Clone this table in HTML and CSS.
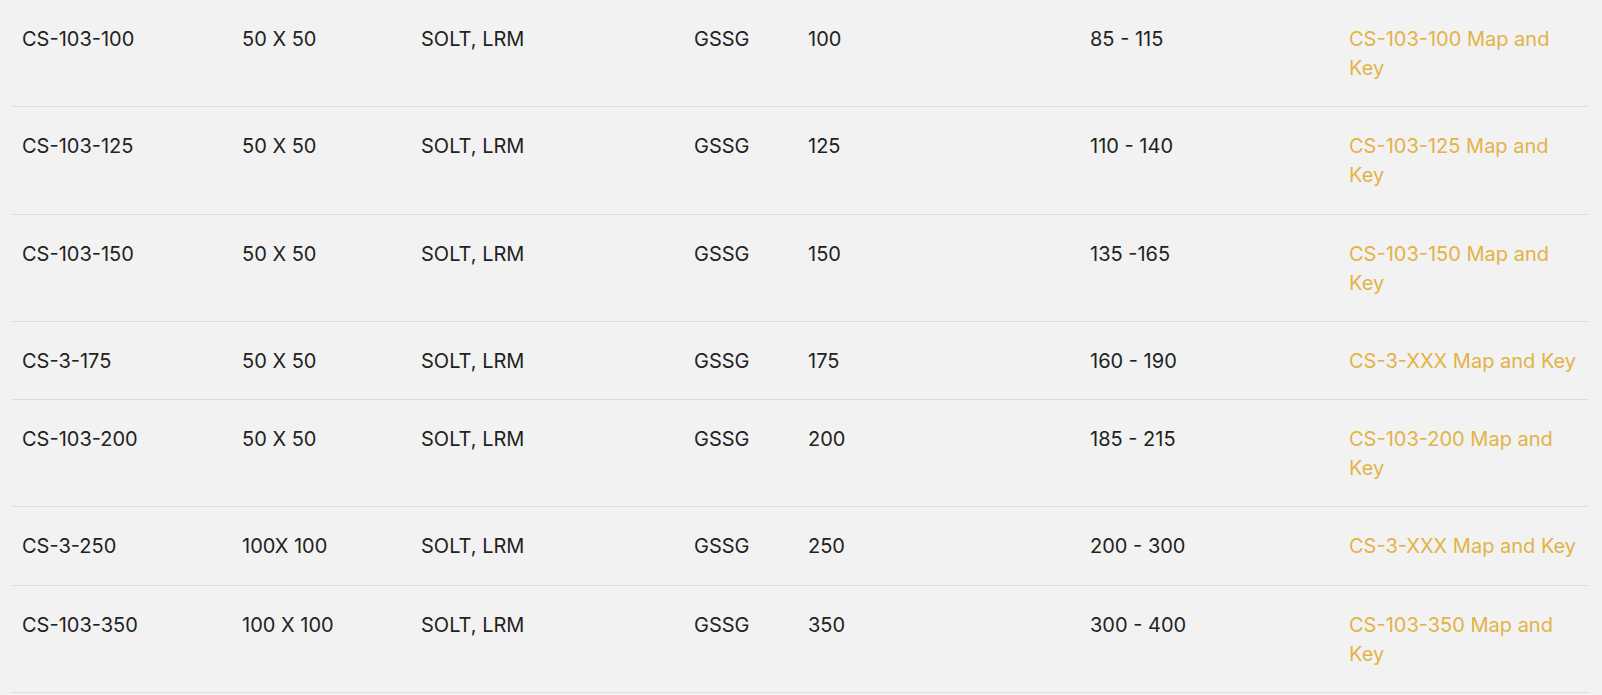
FILE: index.html
```html
<!DOCTYPE html>
<html lang="en">
<head>
<meta charset="utf-8">
<title>Cal Standards</title>
<link rel="stylesheet" href="styles.css">
</head>
<body>
<div class="wrap">
<table class="spec">
<colgroup>
<col class="c1"><col class="c2"><col class="c3"><col class="c4"><col class="c5"><col class="c6"><col class="c7">
</colgroup>
<tbody>
<tr><td>CS-103-100</td><td>50 X 50</td><td>SOLT, LRM</td><td>GSSG</td><td>100</td><td>85 - 115</td><td><a href="#">CS-103-100 Map and Key</a></td></tr>
<tr><td>CS-103-125</td><td>50 X 50</td><td>SOLT, LRM</td><td>GSSG</td><td>125</td><td>110 - 140</td><td><a href="#">CS-103-125 Map and Key</a></td></tr>
<tr><td>CS-103-150</td><td>50 X 50</td><td>SOLT, LRM</td><td>GSSG</td><td>150</td><td>135 -165</td><td><a href="#">CS-103-150 Map and Key</a></td></tr>
<tr><td>CS-3-175</td><td>50 X 50</td><td>SOLT, LRM</td><td>GSSG</td><td>175</td><td>160 - 190</td><td><a href="#">CS-3-XXX Map and Key</a></td></tr>
<tr><td>CS-103-200</td><td>50 X 50</td><td>SOLT, LRM</td><td>GSSG</td><td>200</td><td>185 - 215</td><td><a href="#">CS-103-200 Map and Key</a></td></tr>
<tr><td>CS-3-250</td><td>100X 100</td><td>SOLT, LRM</td><td>GSSG</td><td>250</td><td>200 - 300</td><td><a href="#">CS-3-XXX Map and Key</a></td></tr>
<tr><td>CS-103-350</td><td>100 X 100</td><td>SOLT, LRM</td><td>GSSG</td><td>350</td><td>300 - 400</td><td><a href="#">CS-103-350 Map and Key</a></td></tr>
</tbody>
</table>
</div>
</body>
</html>
```
FILE: styles.css
```css
html, body {
  margin: 0;
  padding: 0;
  background: #f2f2f2;
}
body {
  font-family: Inter, "Liberation Sans", sans-serif;
  font-size: 20px;
  color: #222222;
}
.wrap {
  padding: 0 14px 0 12px;
}
.spec {
  width: 100%;
  table-layout: fixed;
  border-collapse: collapse;
}
.c1 { width: 220px; }
.c2 { width: 179px; }
.c3 { width: 273px; }
.c4 { width: 114px; }
.c5 { width: 282px; }
.c6 { width: 259px; }
.c7 { width: auto; }
.spec td {
  padding: 25px 10px 23.3px 10px;
  line-height: 29px;
  vertical-align: top;
  border-bottom: 1px solid #dcdcdc;
}
.spec a {
  color: #e2b346;
  text-decoration: none;
}
```
